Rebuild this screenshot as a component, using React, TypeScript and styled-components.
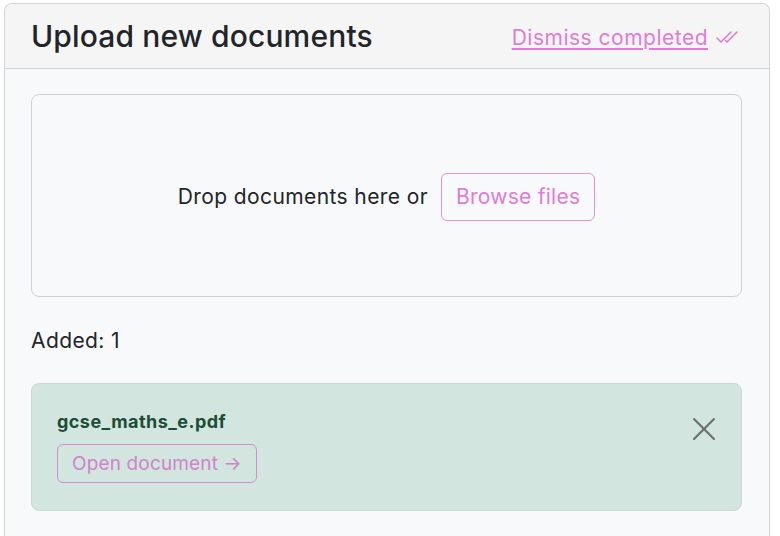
import React from 'react';
import styled, { createGlobalStyle } from 'styled-components';

const GlobalStyle = createGlobalStyle`
  html, body {
    margin: 0;
    padding: 0;
    background: #ffffff;
    font-family: Inter, "Noto Sans", "Liberation Sans", sans-serif;
    color: #212529;
  }
`;

const Page = styled.div`
  padding: 3px 10px 0 4px;
  height: 533px;
  overflow: hidden;
`;

const Card = styled.section`
  border: 1px solid #d3d3d5;
  border-bottom: none;
  border-radius: 8px 8px 0 0;
  background: #f8f9fa;
  height: 100%;
  box-sizing: border-box;
`;

const Header = styled.header`
  display: flex;
  align-items: center;
  justify-content: space-between;
  height: 64px;
  padding: 0 27px 0 26px;
  background: #f5f5f6;
  border-bottom: 1px solid #d3d3d5;
  border-radius: 8px 8px 0 0;
`;

const Title = styled.h1`
  margin: 0;
  font-size: 30px;
  font-weight: 500;
  letter-spacing: 0.15px;
  color: #212529;
`;

const DismissLink = styled.a`
  display: flex;
  align-items: center;
  gap: 8px;
  font-size: 21px;
  letter-spacing: 0.5px;
  color: #e07bd6;
  text-decoration: underline;
  text-underline-offset: 3px;
  cursor: pointer;
  margin-top: 2px;
`;

const Body = styled.div`
  padding: 25px 27px 0 26px;
`;

const DropZone = styled.div`
  height: 203px;
  box-sizing: border-box;
  border: 1px solid #cfd0d3;
  border-radius: 8px;
  display: flex;
  align-items: center;
  justify-content: center;
  gap: 13px;
  padding-top: 2px;
  font-size: 21px;
  letter-spacing: 0.4px;
  color: #212529;
`;

const OutlineButton = styled.button<{ $muted?: boolean }>`
  font-family: inherit;
  font-size: ${(p) => (p.$muted ? 19 : 21)}px;
  letter-spacing: ${(p) => (p.$muted ? 0.15 : 0.25)}px;
  color: ${(p) => (p.$muted ? '#d183cb' : '#e07bd6')};
  background: transparent;
  border: 1px solid ${(p) => (p.$muted ? '#d58bd0' : '#e591dd')};
  border-radius: 6px;
  padding: 0 14px;
  height: ${(p) => (p.$muted ? 39 : 48)}px;
  cursor: pointer;
`;

const Count = styled.p`
  margin: 30px 0 0;
  font-size: 21px;
  letter-spacing: 0.4px;
  line-height: 28px;
  color: #212529;
`;

const FileCard = styled.div`
  margin-top: 28px;
  height: 128px;
  box-sizing: border-box;
  background: #d2e5de;
  border: 1px solid #c8d9d3;
  border-radius: 8px;
  padding: 27px 25px 0 25px;
  display: flex;
  justify-content: space-between;
  align-items: flex-start;
`;

const FileInfo = styled.div`
  display: flex;
  flex-direction: column;
  align-items: flex-start;
  gap: 12px;
`;

const FileName = styled.div`
  font-size: 18px;
  font-weight: 700;
  color: #1b4d37;
  letter-spacing: 0.45px;
`;

const CloseButton = styled.button`
  background: none;
  border: none;
  padding: 0;
  margin-top: 6px;
  cursor: pointer;
  display: flex;
`;

const DoubleCheck = () => (
  <svg width="26" height="16" viewBox="0 0 26 16" fill="none" stroke="#e07bd6" strokeWidth="1.6" strokeLinecap="round" strokeLinejoin="round">
    <path d="M1 9 L5 13 L15 3" />
    <path d="M9.5 11.5 L11 13 L21 3" />
  </svg>
);

export default function App() {
  return (
    <>
      <GlobalStyle />
      <Page>
        <Card>
          <Header>
            <Title>Upload new documents</Title>
            <DismissLink>
              Dismiss completed
              <DoubleCheck />
            </DismissLink>
          </Header>
          <Body>
            <DropZone>
              <span>Drop documents here or</span>
              <OutlineButton>Browse files</OutlineButton>
            </DropZone>
            <Count>Added: 1</Count>
            <FileCard>
              <FileInfo>
                <FileName>gcse_maths_e.pdf</FileName>
                <OutlineButton $muted>Open document →</OutlineButton>
              </FileInfo>
              <CloseButton aria-label="Remove">
                <svg width="24" height="24" viewBox="0 0 24 24" stroke="#69716d" strokeWidth="2.1" strokeLinecap="round">
                  <path d="M2 2 L22 22" />
                  <path d="M22 2 L2 22" />
                </svg>
              </CloseButton>
            </FileCard>
          </Body>
        </Card>
      </Page>
    </>
  );
}
